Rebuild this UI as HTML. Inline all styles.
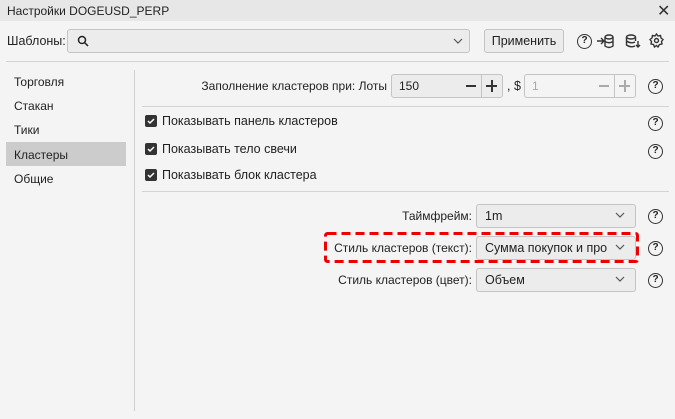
<!DOCTYPE html>
<html><head><meta charset="utf-8"><style>
*{box-sizing:border-box}
body{margin:0;width:675px;height:419px;background:#f4f4f4;font-family:"Liberation Sans","DejaVu Sans",sans-serif;font-size:12px;color:#222;position:relative;overflow:hidden}
.a{position:absolute}
.title{left:0;top:0;width:675px;height:21px;background:#e7e7e7}
.inp{border:1px solid #c4c4c4;border-radius:3px;background:#ececec}
.hr{height:1px;background:#d4d4d4}
.cb{width:12px;height:12px;background:#333;border-radius:2px}
.cb svg{display:block}
.q{width:15px;height:15px;border:1.5px solid #333;border-radius:50%;font-size:10px;font-weight:bold;text-align:center;line-height:12px}
.sel{border:1px solid #c4c4c4;border-radius:3px;background:#ececec;height:24px;line-height:22px;padding-left:8px;font-size:12.5px}
.chev{position:absolute;right:10px;top:7px}
</style></head><body>
<div class="a title"></div>
<div class="a" style="left:7px;top:4px;font-size:12px">Настройки DOGEUSD_PERP</div>
<div class="a" style="left:657px;top:1px;font-size:16px;color:#333">✕</div>
<div class="a" style="left:7px;top:34px;font-size:12.5px">Шаблоны:</div>
<div class="a inp" style="left:67px;top:29px;width:403px;height:24px"></div>
<svg class="a" style="left:77px;top:35px" width="12" height="12"><circle cx="5" cy="5" r="3.5" fill="none" stroke="#222" stroke-width="1.5"/><path d="M7.5 7.5L11 11" stroke="#222" stroke-width="1.5"/></svg>
<svg class="a" style="left:453px;top:38px" width="10" height="6"><path d="M1 1L5 5L9 1" fill="none" stroke="#555" stroke-width="1.2"/></svg>
<div class="a inp" style="left:484px;top:29px;width:80px;height:24px;text-align:center;line-height:22px;font-size:12.5px">Применить</div>
<div class="a q" style="left:577px;top:34px">?</div>
<svg class="a" style="left:596px;top:33px" width="18" height="16" fill="none" stroke="#333" stroke-width="1.4"><path d="M1 8H8M5 5L8 8L5 11"/><ellipse cx="13" cy="4" rx="4" ry="2"/><path d="M9 4V13Q13 16 17 13V4M9 8.5Q13 11 17 8.5"/></svg>
<svg class="a" style="left:625px;top:33px" width="16" height="16" fill="none" stroke="#333" stroke-width="1.4"><ellipse cx="6" cy="4" rx="4.5" ry="2"/><path d="M1.5 4V12Q6 15 10 13M10.5 4V8M1.5 8Q6 11 10 9M13 8V14M11 12L13 14L15 12"/></svg>
<svg class="a" style="left:649px;top:33px" width="15" height="15" fill="none" stroke="#333" stroke-width="1.4"><path d="M7.5 1L9 3L11.5 2.5L12 5L14 6.5L12.5 8.5L13 11L10.5 11.5L9 14L7.5 12.5L5.5 14L4.5 11.5L2 11L2.5 8.5L1 6.5L3 5L3.5 2.5L6 3Z"/><circle cx="7.5" cy="7.5" r="2"/></svg>
<div class="a hr" style="left:6px;top:61px;width:663px"></div>
<div class="a" style="left:134px;top:70px;width:1px;height:341px;background:#d0d0d0"></div>
<div class="a" style="left:14px;top:75px">Торговля</div>
<div class="a" style="left:14px;top:99px">Стакан</div>
<div class="a" style="left:14px;top:123px">Тики</div>
<div class="a" style="left:6px;top:142px;width:120px;height:24px;background:#cccccc"></div>
<div class="a" style="left:14px;top:148px">Кластеры</div>
<div class="a" style="left:14px;top:172px">Общие</div>
<div class="a" style="left:150px;top:79px;width:237px;text-align:right;font-size:12px">Заполнение кластеров при: Лоты</div>
<div class="a inp" style="left:391px;top:74px;width:112px;height:24px"></div>
<div class="a" style="left:399px;top:79px">150</div>
<div class="a" style="left:481px;top:75px;width:1px;height:22px;background:#c4c4c4"></div>
<div class="a" style="left:466px;top:85px;width:10px;height:2px;background:#333"></div>
<div class="a" style="left:486px;top:85px;width:11px;height:2px;background:#333"></div>
<div class="a" style="left:490.5px;top:80px;width:2px;height:12px;background:#333"></div>
<div class="a" style="left:507px;top:79px;font-size:12.5px">, $</div>
<div class="a inp" style="left:524px;top:74px;width:112px;height:24px;background:#f4f4f4"></div>
<div class="a" style="left:532px;top:79px;color:#aaa">1</div>
<div class="a" style="left:614px;top:75px;width:1px;height:22px;background:#c4c4c4"></div>
<div class="a" style="left:599px;top:85px;width:10px;height:1.5px;background:#aaa"></div>
<div class="a" style="left:619px;top:85px;width:11px;height:1.5px;background:#aaa"></div>
<div class="a" style="left:624px;top:80px;width:1.5px;height:12px;background:#aaa"></div>
<div class="a q" style="left:648px;top:79px">?</div>
<div class="a hr" style="left:142px;top:106px;width:527px"></div>
<div class="a cb" style="left:145px;top:115px"><svg width="12" height="12"><path d="M3 6L5 8L9 4" fill="none" stroke="#fff" stroke-width="1.5"/></svg></div>
<div class="a" style="left:162px;top:114px;font-size:12.5px">Показывать панель кластеров</div>
<div class="a q" style="left:648px;top:116px">?</div>
<div class="a cb" style="left:145px;top:143px"><svg width="12" height="12"><path d="M3 6L5 8L9 4" fill="none" stroke="#fff" stroke-width="1.5"/></svg></div>
<div class="a" style="left:162px;top:142px;font-size:12.5px">Показывать тело свечи</div>
<div class="a q" style="left:648px;top:144px">?</div>
<div class="a cb" style="left:145px;top:169px"><svg width="12" height="12"><path d="M3 6L5 8L9 4" fill="none" stroke="#fff" stroke-width="1.5"/></svg></div>
<div class="a" style="left:162px;top:168px;font-size:12.5px">Показывать блок кластера</div>
<div class="a hr" style="left:142px;top:191px;width:527px"></div>
<div class="a" style="left:300px;top:209px;width:172px;text-align:right;font-size:12px">Таймфрейм:</div>
<div class="a sel" style="left:476px;top:204px;width:160px">1m<svg class="chev" width="10" height="6"><path d="M1 1L5 5L9 1" fill="none" stroke="#555" stroke-width="1.2"/></svg></div>
<div class="a q" style="left:648px;top:209px">?</div>
<div class="a" style="left:300px;top:241px;width:172px;text-align:right;font-size:12px">Стиль кластеров (текст):</div>
<div class="a sel" style="left:476px;top:236px;width:160px;overflow:hidden;white-space:nowrap"><span style="display:inline-block;width:122px;overflow:hidden">Сумма покупок и продаж</span><svg class="chev" width="10" height="6"><path d="M1 1L5 5L9 1" fill="none" stroke="#555" stroke-width="1.2"/></svg></div>
<svg class="a" style="left:324px;top:232px" width="315" height="31"><rect x="1.5" y="1.5" width="312" height="28" rx="2" fill="none" stroke="#e00" stroke-width="3" stroke-dasharray="9 5"/></svg>
<div class="a q" style="left:648px;top:241px">?</div>
<div class="a" style="left:300px;top:273px;width:172px;text-align:right;font-size:12px">Стиль кластеров (цвет):</div>
<div class="a sel" style="left:476px;top:268px;width:160px">Объем<svg class="chev" width="10" height="6"><path d="M1 1L5 5L9 1" fill="none" stroke="#555" stroke-width="1.2"/></svg></div>
<div class="a q" style="left:648px;top:273px">?</div>
</body></html>
